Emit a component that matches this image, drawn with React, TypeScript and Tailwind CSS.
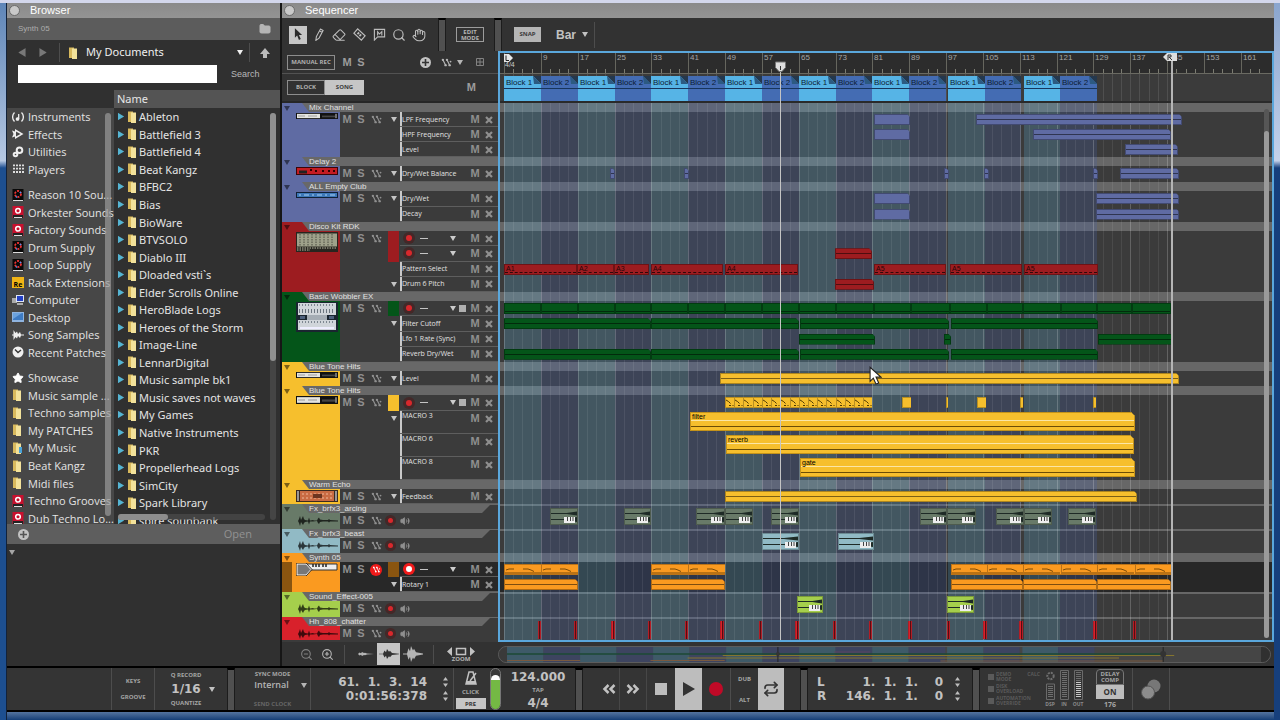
import type { ReactNode } from "react"
import clsx from "clsx"
import { Eraser, Folder, Hand, Search, Star, ZoomIn, ZoomOut, Repeat, Volume2 } from "lucide-react"

/* ---------- data ---------- */

type Clip = { from: number; to: number; label?: string; flat?: boolean }
type LaneKind = "param" | "notes" | "pattern" | "loop" | "tall" | "steps" | "audio" | "hits"
type Lane = {
  kind: LaneKind
  label?: string
  arrow?: boolean
  record?: boolean
  armed?: boolean
  snapshot?: boolean
  clips: Clip[]
}
type Track = {
  name: string
  color: string
  body: string
  device: string
  audio?: boolean
  selected?: boolean
  lanes: Lane[]
}

const spans = (...edges: number[]): Clip[] => edges.slice(1).map((to, i) => ({ from: edges[i], to }))
const pairs = (...list: [number, number, string?][]): Clip[] =>
  list.map(([from, to, label]) => ({ from, to, label }))
const sweep: Clip = { from: 81.3, to: 89.2, flat: true }

const tracks: Track[] = [
  {
    name: "Mix Channel", color: "bg-[#5f6ba3]", body: "h-[45px]", device: "mixer",
    lanes: [
      { kind: "param", label: "LPF Frequency", arrow: true, clips: [sweep, ...pairs([103.4, 148.2])] },
      { kind: "param", label: "HPF Frequency", clips: [sweep, ...pairs([115.8, 145.8])] },
      { kind: "param", label: "Level", clips: pairs([135.8, 147.3]) },
    ],
  },
  {
    name: "Delay 2", color: "bg-[#5f6ba3]", body: "h-[16px]", device: "delay",
    lanes: [
      {
        kind: "param", label: "Dry/Wet Balance", arrow: true,
        clips: pairs([24, 25], [40.1, 41.1], [96.6, 97.6], [105.3, 106.3], [129, 130], [134.7, 147.5]),
      },
    ],
  },
  {
    name: "ALL Empty Club", color: "bg-[#5f6ba3]", body: "h-[31px]", device: "reverb",
    lanes: [
      { kind: "param", label: "Dry/Wet", arrow: true, clips: [sweep, ...pairs([129.5, 147.5])] },
      { kind: "param", label: "Decay", clips: [sweep, ...pairs([129.5, 147.5])] },
    ],
  },
  {
    name: "Disco Kit RDK", color: "bg-[#9d1c20]", body: "h-[61px]", device: "drums",
    lanes: [
      { kind: "notes", record: true, clips: [] },
      { kind: "param", record: true, clips: pairs([72.8, 80.9]) },
      {
        kind: "pattern", label: "Pattern Select",
        clips: pairs(
          [1, 16.8, "A1"], [16.8, 24.8, "A2"], [24.8, 32.4, "A3"], [32.9, 48.5, "A4"], [48.9, 64.8, "A4"],
          [81.3, 96.9, "A5"], [97.8, 113.4, "A5"], [113.9, 129.9, "A5"],
        ),
      },
      { kind: "param", label: "Drum 6 Pitch", arrow: true, clips: pairs([72.8, 81.3]) },
    ],
  },
  {
    name: "Basic Wobbler EX", color: "bg-[#045519]", body: "h-[61px]", device: "synth",
    lanes: [
      {
        kind: "loop", record: true, snapshot: true,
        clips: spans(1, 9, 17, 25, 33, 41, 49, 57, 65, 73, 81.3, 89.3, 97.8, 105.8, 113.6, 121.9, 129.7, 137.3, 145.8),
      },
      { kind: "param", label: "Filter Cutoff", arrow: true, clips: pairs([1, 33], [33, 65], [65.2, 97.6], [98, 129.9]) },
      { kind: "param", label: "Lfo 1 Rate (Sync)", clips: pairs([65, 81.5], [96.5, 98], [129.9, 146.2]) },
      { kind: "param", label: "Reverb Dry/Wet", clips: pairs([1, 33], [33, 65], [65.2, 97.6], [98, 129.9]) },
    ],
  },
  {
    name: "Blue Tone Hits", color: "bg-[#f6bf2d]", body: "h-[15px]", device: "mixer",
    lanes: [{ kind: "param", label: "Level", arrow: true, clips: pairs([47.9, 147.5]) }],
  },
  {
    name: "Blue Tone Hits", color: "bg-[#f6bf2d]", body: "h-[85px] grid-rows-[16px_23px_23px_23px]", device: "combi",
    lanes: [
      {
        kind: "steps", record: true, snapshot: true,
        clips: [
          ...spans(49, 51, 53, 55, 57, 59, 61, 63, 65, 67, 69, 71, 73, 75, 77, 79, 81),
          ...pairs([87.4, 89.3], [96.9, 97.4], [103.7, 105.6], [113.1, 113.6], [128.9, 129.5]),
        ],
      },
      { kind: "tall", label: "MACRO 3", arrow: true, clips: pairs([41.3, 138, "filter"]) },
      { kind: "tall", label: "MACRO 6", clips: pairs([49.1, 137.7, "reverb"]) },
      { kind: "tall", label: "MACRO 8", clips: pairs([65.2, 138, "gate"]) },
    ],
  },
  {
    name: "Warm Echo", color: "bg-[#f6bf2d]", body: "h-[15px]", device: "echo",
    lanes: [{ kind: "param", label: "Feedback", arrow: true, clips: pairs([49, 138.4]) }],
  },
  {
    name: "Fx_brfx3_arcing", color: "bg-[#687a68]", body: "h-[16px]", device: "wave", audio: true,
    lanes: [
      {
        kind: "audio",
        clips: pairs(
          [10.9, 17], [27, 33], [42.8, 49], [49, 55], [59, 65], [91.3, 97.3], [97.3, 103.4],
          [107.8, 113.9], [113.9, 119.9], [123.4, 129.5],
        ),
      },
    ],
  },
  {
    name: "Fx_brfx3_beast", color: "bg-[#91bac5]", body: "h-[15px]", device: "wave", audio: true,
    lanes: [{ kind: "audio", clips: pairs([57, 65], [73.5, 81.3]) }],
  },
  {
    name: "Synth 05", color: "bg-[#fa9a20]", body: "h-[30px]", device: "keys", selected: true,
    lanes: [
      {
        kind: "notes", record: true, armed: true,
        clips: [...spans(1, 9, 17), ...spans(33, 41, 49), ...spans(98, 105.8, 113.6, 121.9, 129.7, 138, 146)],
      },
      { kind: "param", label: "Rotary 1", arrow: true, clips: [...pairs([1, 17], [33, 49]), ...spans(98, 113.6, 129.7, 145.8)] },
    ],
  },
  {
    name: "Sound_Effect-005", color: "bg-[#a5cf4c]", body: "h-[16px]", device: "wave", audio: true,
    lanes: [{ kind: "audio", clips: pairs([64.6, 70.2], [97.3, 103]) }],
  },
  {
    name: "Hh_808_chatter", color: "bg-[#d8212b]", body: "h-[14px]", device: "wave", audio: true,
    lanes: [
      {
        kind: "hits",
        clips: [
          8.3, 16.1, 24.2, 32.2, 40.2, 48, 56.3, 64.3, 72.4, 80.2, 88.7, 97.1, 105, 112.8, 128.9, 137.5,
        ].map((from) => ({ from, to: from + 0.8 })),
      },
    ],
  },
]

const blocks = [
  ...spans(1, 9, 17, 25, 33, 41, 49, 57, 65, 73, 81, 89, 97),
  ...spans(97.4, 105.4, 113.3),
  ...spans(113.9, 121.7, 129.7),
]

const shortcuts: [string, string][][] = [
  [["instruments", "Instruments"], ["effects", "Effects"], ["utilities", "Utilities"], ["players", "Players"]],
  [
    ["supply", "Reason 10 Sou..."], ["refill", "Orkester Sounds"], ["refill", "Factory Sounds"],
    ["supply", "Drum Supply"], ["supply", "Loop Supply"], ["re", "Rack Extensions"], ["computer", "Computer"],
    ["desktop", "Desktop"], ["samples", "Song Samples"], ["recent", "Recent Patches"],
  ],
  [
    ["star", "Showcase"], ["folder", "Music sample ..."], ["folder", "Techno samples"], ["folder", "My PATCHES"],
    ["music", "My Music"], ["folder", "Beat Kangz"], ["folder", "Midi files"], ["refill", "Techno Grooves"],
    ["refill", "Dub Techno Lo..."],
  ],
]
const shortcutRows = ["h-[70px]", "mt-2 h-[175px]", "mt-2 h-[158px]"]

const folders = [
  "Ableton", "Battlefield 3", "Battlefield 4", "Beat Kangz", "BFBC2", "Bias", "BioWare", "BTVSOLO", "Diablo III",
  "Dloaded vsti`s", "Elder Scrolls Online", "HeroBlade Logs", "Heroes of the Storm", "Image-Line", "LennarDigital",
  "Music sample bk1", "Music saves not waves", "My Games", "Native Instruments", "PKR", "Propellerhead Logs",
  "SimCity", "Spark Library", "spire sounbank",
]

/* ---------- timeline helpers ---------- */

const BAR = 4.605
const xOf = (bar: number) => Math.round(4 + (bar - 1) * BAR)
const place = (c: Clip) => ({ left: xOf(c.from), width: Math.max(2, xOf(c.to) - xOf(c.from)) })

/* ---------- small pieces ---------- */

function Down({ className }: { className?: string }) {
  return (
    <svg viewBox="0 0 6 5" className={clsx("h-[5px] w-[6px] shrink-0 fill-current", className)}>
      <path d="M0 0h6L3 5z" />
    </svg>
  )
}

function UpDown() {
  return (
    <svg viewBox="0 0 5 12" className="h-3 w-[5px] fill-[#bdbdbd]">
      <path d="M0 4.5h5L2.5 1zM0 7.5h5L2.5 11z" />
    </svg>
  )
}

function Automation({ className }: { className?: string }) {
  return (
    <svg viewBox="0 0 12 10" className={clsx("h-[9px] w-[11px] shrink-0", className)} fill="none" stroke="currentColor" strokeWidth="1.300">
      <path d="M2 2l3 6M6.500 2l3 6" />
      <g fill="currentColor" stroke="none">
        <circle cx="2" cy="2" r="1.300" /><circle cx="5" cy="8" r="1.300" /><circle cx="6.500" cy="2" r="1.300" />
        <circle cx="9.500" cy="8" r="1.300" /><circle cx="10.500" cy="4" r="1" />
      </g>
    </svg>
  )
}

function Wave({ className }: { className?: string }) {
  return (
    <svg viewBox="0 0 42 12" preserveAspectRatio="none" className={className} fill="currentColor">
      <path d="M0 6h2l1-2 1-3 1 4 2-4 1 3 1 1 3 .5 1-3 1 3 3-.5 1 .5 3 0 1-2 1-1 1 2 3 .5 5 0 1-1 1 1 8 .5v1l-8 0-1 1-1-1-5 0-3 .5-1 2-1-1-1-2-4 .5-3 0-1 3-1-3-3 .5-1 1-1 2-2-3-1 4-1-3-1-2H0z" />
    </svg>
  )
}

function Spindle({ className }: { className?: string }) {
  return (
    <svg viewBox="0 0 20 18" preserveAspectRatio="none" className={className} fill="currentColor">
      <path d="M0 8.500h4l1.500-6L7 6l1-6 2 5 1-2 2 4 7 1.500v1L13 11l-2 4-1-2-2 5-1-6-1.500 3.500-1.500-6H0z" />
    </svg>
  )
}

function Bevel({ className }: { className?: string }) {
  return (
    <div className={clsx("w-2 shrink-0 self-stretch border-x border-t-2 border-[#1c1c1c] border-t-black bg-[#505050]", className)} />
  )
}

function Rule({ className }: { className?: string }) {
  return <div className={clsx("w-px shrink-0 bg-[#4d4d4d]", className)} />
}

function DeviceIcon({ kind }: { kind: string }) {
  if (kind === "wave") return <Wave className="mt-px h-3 w-[42px] text-black/70" />
  if (kind === "keys")
    return (
      <svg viewBox="0 0 42 13" className="h-[13px] w-[42px]">
        <path d="M10 1h31v6H14z" fill="#eee" stroke="#333" />
        <path d="M17 1v3M20 1v3M23 1v3M27 1v3M30 1v3" stroke="#222" strokeWidth="1.500" />
        <path d="M1 1h9l5 5.500-5 5.500H1z" fill="#777" stroke="#fff" />
        <path d="M0 0h10l6 6.500-6 6.500H0z" fill="none" stroke="#333" />
      </svg>
    )
  if (kind === "drums")
    return (
      <svg viewBox="0 0 42 20" className="h-5 w-[42px]">
        <path d="M0 0h42v20H0z" fill="#27251f" />
        <path d="M1 1.500h40v13H1z" fill="#9fa18a" />
        {[4, 8, 12, 16, 20, 24, 28, 32, 36].map((x) => (
          <path key={x} d={`M${x} 2v12`} stroke="#4c4d40" strokeDasharray="1.500 1" />
        ))}
        <path d="M1 16h40M1 18h13" stroke="#b9bba3" strokeDasharray="1.500 1" />
      </svg>
    )
  if (kind === "synth")
    return (
      <svg viewBox="0 0 42 30" className="h-[30px] w-[42px]">
        <path d="M0 0h42v30H0z" fill="#1a2530" />
        <path d="M2 1h38v12H2zM2 18h38v10H2z" fill="#d0d5da" />
        <path d="M11 13h20v5H11z" fill="#a4acb4" />
        <path d="M3 3h36M3 20h36" stroke="#7d8791" strokeWidth="2" strokeDasharray="1 2" />
        <path d="M3 9h36" stroke="#6c7680" strokeWidth="4" strokeDasharray="1 2" />
        <path d="M4 26h34" stroke="#eef" strokeWidth="2" />
        <path d="M4 15.500h5M33 15.500h5" stroke="#4d607c" strokeWidth="3" />
      </svg>
    )
  if (kind === "delay")
    return (
      <svg viewBox="0 0 42 8" className="h-2 w-[42px]">
        <path d="M0 0h42v8H0z" fill="#3a0508" />
        <path d="M1 1h40v6H1z" fill="#c41c22" />
        <path d="M3 5h8" stroke="#222" strokeWidth="3" />
        <path d="M14 3h2M19 4h2M26 4h2M32 4h2M37 4h2" stroke="#300" strokeWidth="2" />
      </svg>
    )
  if (kind === "echo")
    return (
      <svg viewBox="0 0 42 12" className="h-3 w-[42px]">
        <path d="M0 0h42v12H0z" fill="#3a2a20" />
        <path d="M4 1h34v10H4z" fill="#c96b43" />
        <path d="M6 4h30M6 8h30" stroke="#f0b99a" strokeDasharray="2 2" />
        <path d="M17 4h9v4h-9z" fill="#6d3520" />
        <path d="M2 1v10M40 1v10" stroke="#bbb" strokeWidth="1.500" />
      </svg>
    )
  if (kind === "reverb")
    return (
      <svg viewBox="0 0 42 6" className="h-[6px] w-[42px]">
        <path d="M0 0h42v6H0z" fill="#112036" />
        <path d="M1 1h40v4H1z" fill="#3d78b8" />
        <path d="M3 3h36" stroke="#a9d0f3" strokeDasharray="2 3 5 3" />
      </svg>
    )
  return (
    <svg viewBox="0 0 42 7" preserveAspectRatio="none" className={clsx("w-[42px]", kind === "combi" ? "h-2" : "h-[6px]")}>
      <path d="M0 0h42v7H0z" fill="#111" />
      <path d="M1 1h23v5H1z" fill="#e4e4e0" />
      <path d="M2 3.500h7M12 3.500h9" stroke="#999" />
      <path d="M26 4h13" stroke="#444" strokeWidth="2" />
      <path d="M40 1v5" stroke="#ddd" />
    </svg>
  )
}

function ShortcutIcon({ kind }: { kind: string }) {
  if (kind === "star") return <Star className="size-3 fill-white text-white" />
  const art: Record<string, ReactNode> = {
    instruments: (
      <g fill="none" stroke="#eee" strokeWidth="1.300">
        <path d="M2.500 1.500C0 4 0 8 2.500 10.500M9.500 1.500C12 4 12 8 9.500 10.500M6.700 8V3" />
        <circle cx="5.500" cy="8" r="1.200" fill="#eee" />
      </g>
    ),
    effects: <path d="M0 2.500l3 1V1l8.500 5L3 11V8.500l-3 1L1.500 6zM4 3.500v5L8.500 6z" fill="#eee" fillRule="evenodd" />,
    utilities: (
      <g fill="none" stroke="#eee" strokeWidth="2">
        <circle cx="7.500" cy="4.200" r="2.800" /><circle cx="3.500" cy="8.500" r="1.800" />
      </g>
    ),
    players: <path d="M2 1.500v10M5 1.500v10M8 1.500v10M11 1.500v10" stroke="#eee" strokeWidth="1.800" strokeDasharray="1.800 1.500" />,
    supply: (
      <>
        <path d="M.5 0h11v12H.5z" fill="#080808" />
        <circle cx="6" cy="5" r="3" fill="none" stroke="#e33" strokeWidth="1.800" strokeDasharray="2 1.200" />
        <path d="M4 7.500l1 .8M8 3l1 1" stroke="#49f" strokeWidth="1.600" />
        <path d="M1 11.500h10" stroke="#ddd" />
      </>
    ),
    refill: (
      <>
        <path d="M.5 0h11v12H.5z" fill="#c8102e" />
        <circle cx="6" cy="4.800" r="2.300" fill="none" stroke="#fff" strokeWidth="1.500" />
        <path d="M1 9h10v3H1z" fill="#222" /><path d="M2 11.500h8" stroke="#ddd" />
      </>
    ),
    computer: (
      <>
        <path d="M0 4h5v5H0z" fill="#aaa" /><path d="M4 1h8v7H4z" fill="#dfe6f5" />
        <path d="M5 2h6v5H5z" fill="#2340c4" /><path d="M5 10h6" stroke="#ccc" strokeWidth="1.500" />
      </>
    ),
    desktop: <><path d="M0 1h12v10H0z" fill="#8fb4e0" /><path d="M1 2h10v7H1z" fill="#3d7bc4" /><path d="M1 8l9-6H1z" fill="#6ba2de" /></>,
    samples: <path d="M0 5.500h1.500V1l2 3L5 2.500l1 2.500L8 3l1 2.500h3v1H9L8 9 6 7 5 9.500 3.500 8l-2 3V6.500H0z" fill="#eee" />,
    recent: <><circle cx="6" cy="6" r="5.500" fill="#eee" /><path d="M3 3.500l3 3 3-2.500" stroke="#333" strokeWidth="1.400" fill="none" /></>,
    folder: <><path d="M1 .5h5V11H1z" fill="#d8b95d" /><path d="M4 1.500h5V12H4z" fill="#f3e29b" /></>,
    music: <><path d="M1 .5h5V11H1z" fill="#d8b95d" /><path d="M4 1.500h5V12H4z" fill="#f3e29b" /><path d="M7 5h3v6H7z" fill="#4aa3d8" /></>,
  }
  if (kind === "re")
    return <span className="flex h-[11px] w-3 items-end justify-center bg-[#f0b416] text-[7px] font-bold leading-none text-black">Re</span>
  return <svg viewBox="0 0 12 12" className="size-3">{art[kind]}</svg>
}

/* ---------- browser ---------- */

function TitleBar({ children }: { children: ReactNode }) {
  return (
    <div className="flex h-[15px] items-center gap-[10px] bg-linear-to-b from-[#8a8a8a] to-[#949494] pl-[2px]">
      <button aria-label="Collapse panel" className="size-[11px] rounded-full border border-[#6b6b6b] bg-[#c9c9c9]" />
      <h2 className="text-[11px] leading-none font-normal text-white">{children}</h2>
    </div>
  )
}

function Browser() {
  return (
    <section className="flex w-[273px] shrink-0 flex-col bg-[#303030]">
      <TitleBar>Browser</TitleBar>
      <div className="flex h-[22px] items-center justify-between bg-[#5c5c5c] pr-[9px] pl-[11px] text-[8px] text-[#adadad]">
        Synth 05
        <Folder className="size-3 fill-[#b5b5b5] text-[#b5b5b5]" />
      </div>
      <div className="flex h-[25px] items-center pr-[10px] pl-3">
        <button aria-label="Back"><Down className="scale-150 rotate-90 text-[#787878]" /></button>
        <button aria-label="Forward" className="ml-[15px]"><Down className="scale-150 -rotate-90 text-[#787878]" /></button>
        <Rule className="mr-2 ml-[13px] h-[19px]" />
        <button className="flex flex-1 items-center gap-[6px] text-left font-['Noto_Sans',sans-serif] text-[11px] text-[#efefef]">
          <ShortcutIcon kind="folder" />
          My Documents
          <Down className="mr-[6px] ml-auto" />
        </button>
        <Rule className="mr-[10px] h-[19px]" />
        <button aria-label="Up one level">
          <svg viewBox="0 0 10 10" className="size-[10px] fill-[#bbb]"><path d="M5 0l5 6H7v4H3V6H0z" /></svg>
        </button>
      </div>
      <div className="flex h-[25px] items-start gap-[14px] pl-[11px]">
        <input aria-label="Search files" className="h-[18px] w-[199px] bg-white px-1 text-[10px]" />
        <button className="pt-[3px] text-[9px] leading-[12px] text-[#b8b8b8]">Search</button>
      </div>
      <div className="ml-[107px] h-[18px] bg-[#545454] pl-[3px] font-['Noto_Sans',sans-serif] text-[11px] leading-[18px] text-[#e6e6e6]">Name</div>
      <div className="flex h-[416px] overflow-hidden text-[11px] text-[#e4e4e4]">
        <nav className="relative w-[107px] overflow-hidden bg-[#474747] font-['Open_Sans',sans-serif]">
          {shortcuts.map((group, i) => (
            <ul key={i} className={clsx("grid auto-rows-fr", shortcutRows[i])}>
              {group.map(([icon, text]) => (
                <li key={text} className="flex min-h-0 items-center">
                  <a href="#" className="flex items-center gap-1 pl-[5px] leading-[17px] whitespace-nowrap [&>:first-child]:shrink-0">
                    <ShortcutIcon kind={icon} />{text}
                  </a>
                </li>
              ))}
            </ul>
          ))}
          <div className="absolute top-[5px] right-[3px] h-[403px] w-[6px] rounded-full bg-[#9a9a9a]/70" />
        </nav>
        <div className="relative flex-1 overflow-hidden font-['Noto_Sans',sans-serif]">
          <ul className="grid h-[421px] auto-rows-fr">
            {folders.map((name) => (
              <li key={name} className="flex min-h-0 items-center pl-1 leading-[17px] whitespace-nowrap">
                <Down className="scale-125 -rotate-90 text-[#55b4d2]" />
                <span className="ml-[3px]"><ShortcutIcon kind="folder" /></span>
                {name}
              </li>
            ))}
          </ul>
          <div className="absolute top-[5px] right-1 h-[407px] w-[6px] rounded-full bg-[#454545]">
            <div className="h-[248px] rounded-full bg-[#909090]" />
          </div>
          <div className="absolute bottom-1 left-1 h-[6px] w-[147px] rounded-full bg-[#505050]/60">
            <div className="h-full w-[50px] rounded-full bg-[#8d8d8d]" />
          </div>
        </div>
      </div>
      <div className="flex h-5 items-center justify-between bg-[#5e5e5e] pr-7 pl-[11px] font-['Open_Sans',sans-serif] text-[11px]">
        <button aria-label="Add" className="flex size-[11px] items-center justify-center rounded-full bg-[#c2c2c2]">
          <svg viewBox="0 0 7 7" className="size-[7px]"><path d="M3.500 0v7M0 3.500h7" stroke="#555" strokeWidth="1.600" /></svg>
        </button>
        <button className="text-[#929292]">Open</button>
      </div>
      <Down className="mt-[6px] ml-[2px] text-[#a5a5a5]" />
    </section>
  )
}

/* ---------- sequencer ---------- */

function Toolbar() {
  const icon = "size-[14px] text-[#bdbdbd]"
  const tool = "flex h-[18px] w-[20px] items-center justify-center"
  return (
    <div className="flex h-[33px] items-center bg-[#323232] pl-[7px]">
      <button aria-label="Select" className="flex size-[18px] items-center justify-center bg-[#c6c6c6]">
        <svg viewBox="0 0 10 14" className="h-[13px] w-[9px]"><path d="M1 0v10.500l2.500-2.500 2 5 2-1-2-4.500H9z" fill="#2b2b2b" /></svg>
      </button>
      <button aria-label="Pencil" className={clsx(tool, "ml-[2px]")}>
        <svg viewBox="0 0 10 14" className="h-[13px] w-[9px]" fill="none" stroke="#bdbdbd" strokeWidth="1.200"><path d="M6 1l3 1.500L4.500 11 1 13.500 1.500 9.500zM5 3l3 1.500" /></svg>
      </button>
      <button aria-label="Erase" className={tool}><Eraser className={icon} strokeWidth={1.8} /></button>
      <button aria-label="Razor" className={tool}>
        <svg viewBox="0 0 14 14" className="size-[13px]" fill="none" stroke="#bdbdbd" strokeWidth="1.300">
          <path d="M5 1L1 5.500 9 13l4-4.500z" /><path d="M5 5l4 4" strokeWidth="2.500" strokeDasharray="2 1" />
        </svg>
      </button>
      <button aria-label="Mute" className={tool}>
        <svg viewBox="0 0 14 14" className="size-[13px]" fill="none" stroke="#bdbdbd" strokeWidth="1.200"><path d="M1.500 13V1.500h11v8H5z" /><path d="M5 8V4l2 2.500L9.500 4v4" /></svg>
      </button>
      <button aria-label="Magnify" className={tool}><Search className={icon} strokeWidth={2} /></button>
      <button aria-label="Hand" className={tool}><Hand className={icon} strokeWidth={1.8} /></button>
      <Bevel className="mr-[10px] ml-[9px]" />
      <button className="h-[15px] w-[28px] border border-[#9c9c9c] font-['Open_Sans',sans-serif] text-[6px] leading-[6px] font-bold text-[#b5b5b5]">EDIT MODE</button>
      <Bevel className="mr-[12px] ml-[10px]" />
      <button className="h-[15px] w-[27px] bg-[#b5b5b5] font-['Open_Sans',sans-serif] text-[6px] font-bold text-[#3a3a3a]">SNAP</button>
      <button className="ml-[15px] flex items-center gap-[6px] text-[12px] font-bold text-[#c2c2c2]">Bar<Down /></button>
      <Rule className="ml-[6px] h-[26px]" />
    </div>
  )
}

function ListHeader() {
  return (
    <div className="bg-[#323232] text-[#9c9c9c]">
      <div className="flex h-[23px] items-center border-b border-[#525252] pr-[14px] pl-[5px]">
        <button className="h-[15px] w-[48px] border border-[#8d8d8d] font-['Open_Sans',sans-serif] text-[6px] font-bold text-[#b0b0b0]">MANUAL REC</button>
        <button className="ml-[7px] w-[10px] text-[11px] font-bold">M</button>
        <button className="ml-1 w-[10px] text-[11px] font-bold">S</button>
        <button aria-label="Create track" className="ml-auto flex size-[11px] items-center justify-center rounded-full bg-[#c2c2c2]">
          <svg viewBox="0 0 7 7" className="size-[7px]"><path d="M3.500 0v7M0 3.500h7" stroke="#333" strokeWidth="1.600" /></svg>
        </button>
        <Automation className="ml-[10px] text-[#b5b5b5]" />
        <Down className="ml-[5px] text-[#b5b5b5]" />
        <svg viewBox="0 0 8 8" className="ml-[13px] size-2" fill="none" stroke="#828282"><path d="M.5.5h7v7h-7zM4 0v8M0 4h8" /></svg>
      </div>
      <div className="flex h-[29px] items-center justify-between border-b-2 border-[#262626] pr-[22px] pl-[5px]">
        <div className="flex font-['Open_Sans',sans-serif] text-[6px] font-bold">
          <button className="h-[15px] w-[38px] border border-[#8d8d8d] text-[#b0b0b0]">BLOCK</button>
          <button className="h-[15px] w-[39px] bg-[#c6c6c6] text-[#3a3a3a]">SONG</button>
        </div>
        <button className="text-[11px] font-bold">M</button>
      </div>
    </div>
  )
}

function LaneHead({ lane, color }: { lane: Lane; color: string }) {
  return (
    <div className="flex min-h-0 text-[#8f8f8f]">
      <div className={clsx("mr-px flex w-[11px] shrink-0 justify-center", lane.record && color)}>
        {lane.arrow && <Down className="mt-[5px] text-[#c4c4c4]" />}
      </div>
      <div className="flex min-w-0 flex-1 border-b border-[#5e5e5e]">
        {lane.record ? (
          <>
            <button aria-label="Record enable" className={clsx("ml-[3px] flex size-3 items-center justify-center self-center rounded-full", lane.armed ? "bg-[#f01a1a]" : "bg-[#442828]")}>
              <span className={clsx("rounded-full", lane.armed ? "size-[6px] bg-white" : "size-[6px] bg-[#d8282c]")} />
            </button>
            <span className="ml-[5px] h-px w-2 self-center bg-[#c4c4c4]" />
            <Down className="ml-[22px] self-center text-[#ccc]" />
            <span className={clsx("ml-[3px] size-[7px] self-center", lane.snapshot && "bg-[#b0b0b0]")} />
          </>
        ) : (
          <span className={clsx("flex flex-1 border-l-2 border-[#c9c9c9] font-['Open_Sans',sans-serif] text-[7px] whitespace-nowrap text-[#e2e2e2]", lane.kind === "tall" ? "items-start leading-[9px]" : "items-center leading-none")}>
            {lane.label}
          </span>
        )}
        <span className="ml-auto flex h-[15px] items-center gap-[5px] pr-[5px]">
          <button aria-label="Mute lane" className="w-[10px] text-[11px] leading-none font-bold">M</button>
          <button aria-label="Delete lane">
            <svg viewBox="0 0 8 8" className="size-2"><path d="M1 1l6 6M7 1L1 7" stroke="currentColor" strokeWidth="2.200" /></svg>
          </button>
        </span>
      </div>
    </div>
  )
}

function TrackHead({ track }: { track: Track }) {
  return (
    <div>
      <div className="flex h-[9px] bg-[#3b3b3b]">
        <div className="flex flex-1 bg-[#686868]">
          <div className={clsx("h-full w-[27px] pt-[3px] pl-[2px] [clip-path:polygon(0_0,20px_0,27px_100%,0_100%)]", track.color)}>
            <Down className="text-black/50" />
          </div>
          <span className="relative z-10 text-[8px] leading-[10px] whitespace-nowrap text-[#e0e0e0]">{track.name}</span>
        </div>
        {track.audio && <div className="w-[16px] bg-[#686868] [clip-path:polygon(0_0,100%_0,100%_1px,8px_1px,0_100%)]" />}
      </div>
      <div className={clsx("flex", track.selected ? "bg-[#282828]" : "bg-[#3b3b3b]", track.body.split(" ")[0])}>
        <div className={clsx("flex w-[58px] shrink-0 pt-px", track.color)}>
          <div className={clsx("w-[10px]", track.selected && "-mt-px bg-[#8a5510]")} />
          <div className="ml-1"><DeviceIcon kind={track.device} /></div>
        </div>
        <div className="flex h-[15px] shrink-0 items-center pl-[2px] text-[11px] leading-none font-bold text-[#8f8f8f]">
          <button aria-label="Mute" className="w-[10px]">M</button>
          <button aria-label="Solo" className="ml-[5px] w-2">S</button>
          <button aria-label="Automation" className={clsx("ml-[5px] flex size-[12px] items-center justify-center rounded-full", track.selected && "bg-[#f01a1a] text-white")}>
            <Automation className={track.selected ? "scale-75" : undefined} />
          </button>
        </div>
        {track.audio ? (
          <div className="flex h-[15px] items-center gap-1 pl-[3px]">
            <button aria-label="Record enable" className="flex size-[11px] items-center justify-center rounded-full bg-[#442828]">
              <span className="size-[5px] rounded-full bg-[#d8282c]" />
            </button>
            <Volume2 className="size-[10px] fill-[#8f8f8f] text-[#8f8f8f]" />
          </div>
        ) : (
          <div className={clsx("ml-[6px] grid min-w-0 flex-1 auto-rows-fr", track.body)}>
            {track.lanes.map((lane, i) => <LaneHead key={i} lane={lane} color={track.selected ? "bg-[#8a5510]" : track.color} />)}
          </div>
        )}
      </div>
    </div>
  )
}

function ClipView({ clip, kind, color }: { clip: Clip; kind: LaneKind; color: string }) {
  const base = clsx("absolute overflow-hidden", color)
  if (kind === "hits")
    return (
      <div className={clsx(base, "top-[2px] h-[18px] border-x border-[#b31c25]")} style={place(clip)}>
        <div className="mx-auto h-full w-px bg-black/60" />
      </div>
    )
  if (kind === "audio")
    return (
      <div className={clsx(base, "top-[2px] h-[17px] border border-black/25")} style={place(clip)}>
        <svg viewBox="0 0 30 15" preserveAspectRatio="none" className="size-full">
          <path d="M0 4h18l12-1.500v4L18 5H0zM0 10h18l12-2v5l-12-2H0z" fill="#1e2a26" />
        </svg>
        <svg viewBox="0 0 11 6" className="absolute right-[2px] bottom-px h-[6px] w-[11px]">
          <path d="M0 0h11v6H0z" fill="#eee" /><path d="M3.500 0v4M6.500 0v4M9 0v4" stroke="#444" />
        </svg>
      </div>
    )
  if (kind === "tall")
    return (
      <div className={clsx(base, "top-px h-[19px] border border-[#c4931a] [clip-path:polygon(0_0,calc(100%-4px)_0,100%_4px,100%_100%,0_100%)]")} style={place(clip)}>
        <span className="absolute top-0 left-px text-[7px] leading-[7px] text-black">{clip.label}</span>
        <div className="mt-[7px] h-px bg-[#fbe6a6]" />
        <div className="mt-[5px] h-px bg-[#6b4d05]" />
      </div>
    )
  if (kind === "steps" || kind === "notes")
    return (
      <div className={clsx(base, "top-[2px] h-[11px] border border-r-0 border-black/25")} style={place(clip)}>
        {kind === "steps" ? (
          clip.to - clip.from === 2 && <svg viewBox="0 0 9 9" className="size-[9px]"><path d="M0 2l2.500 1.500 2 2M3 7.500h2M6.500 7.500h1" stroke="#4d3903" fill="none" /></svg>
        ) : (
          <svg viewBox="0 0 36 9" className="h-[9px] w-9">
            <path d="M1 5l3-1h5M18 4h5l3 1 3 1.500M0 8h36" stroke="#7a4a08" fill="none" />
          </svg>
        )}
      </div>
    )
  return (
    <div
      className={clsx(base, "top-[2px] h-[11px] border border-black/30", kind === "param" && "[clip-path:polygon(0_0,calc(100%-3px)_0,100%_3px,100%_100%,0_100%)]")}
      style={place(clip)}
    >
      {clip.label && <span className="absolute top-0 left-px text-[7px] leading-[8px] text-black/80">{clip.label}</span>}
      {kind === "pattern" && <div className="mt-[7px] border-t border-dashed border-black/70" />}
      {kind === "loop" && <div className="mt-[7px] h-px bg-black/50" />}
      {kind === "param" && !clip.flat && <div className="mt-1 h-px bg-black/50" />}
    </div>
  )
}

function Arrange() {
  const ruler = Array.from({ length: 21 }, (_, i) => 1 + i * 8)
  const ticks = Array.from({ length: 83 }, (_, i) => 1 + i * 2)
  const grid = ticks.filter((bar) => bar < 146)
  return (
    <div className="relative min-w-0 flex-1 overflow-hidden border-2 border-[#5aa7dc] bg-[#3b3b3b]">
      {/* ruler */}
      <div className="relative h-[21px] border-b border-[#6a6a62] bg-[#2c2c2c]">
        {ticks.map((bar) => (
          <i key={bar} className="absolute bottom-0 h-[4px] w-px bg-[#7c7c72]" style={{ left: xOf(bar) }} />
        ))}
        {ruler.map((bar) => (
          <span key={bar} className="absolute top-0 h-full border-l border-[#66665e] pl-px text-[8px] leading-[9px] text-[#a5a5a5]" style={{ left: xOf(bar) }}>
            {bar > 1 && bar}
          </span>
        ))}
        <svg viewBox="0 0 10 18" className="absolute top-0 left-1 h-[18px] w-[10px]">
          <path d="M0 1h5l4 4-4 4H0z" fill="#e6e6e6" /><path d="M2 2.500v5h3" stroke="#222" fill="none" />
        </svg>
        <span className="absolute top-[8px] left-[5px] text-[7px] leading-[8px] text-[#ccc]">4/4</span>
      </div>
      {/* block lane */}
      <div className="relative h-[29px] border-b-2 border-[#2a2a2a] bg-[#3b3b3b]">
        {grid.map((bar) => <i key={bar} className="absolute inset-y-0 w-px bg-white/10" style={{ left: xOf(bar) }} />)}
        {blocks.map((b, i) => (
          <div key={i} className={clsx("absolute top-[2px] h-[25px]", i % 2 ? "bg-[#446cb3]" : "bg-[#56b4e6]")} style={place(b)}>
            <div className="flex h-[13px] justify-between border-b border-[#17355c] pl-[2px]">
              <span className="text-[8px] leading-[13px] whitespace-nowrap text-[#0c1c33]">{i % 2 ? "Block 2" : "Block 1"}</span>
              <svg viewBox="0 0 8 8" className="size-[8px] shrink-0"><path d="M0 0h8v8z" fill="#25384d" /><path d="M0 0l8 8H1z" fill="#2c5a82" /></svg>
            </div>
          </div>
        ))}
      </div>
      {/* track lanes */}
      <div className="relative">
        {tracks.map((track, i) => (
          <div key={i} className={track.selected ? "bg-[#272727]" : undefined}>
            <div className="h-[9px] bg-[#3b3b3b]">
              <div className={clsx("bg-[#676767]", track.audio ? "h-[2px]" : "h-full")} />
            </div>
            <div className={track.body.split(" ")[0]} />
          </div>
        ))}
        {blocks.map((b, i) => (
          <div key={i} className={clsx("absolute inset-y-0", i % 2 ? "bg-[#4864b4]/24" : "bg-[#60b4dd]/24")} style={place(b)} />
        ))}
        {grid.map((bar) => (
          <i key={bar} className={clsx("absolute inset-y-0 w-px", bar % 8 === 1 ? "bg-white/20" : "bg-white/8")} style={{ left: xOf(bar) }} />
        ))}
        <div className="absolute inset-0">
          {tracks.map((track, i) =>
            track.audio ? (
              <div key={i}>
                <div className="relative h-[9px]">
                  <div className="absolute inset-x-0 top-[2px]">
                    {track.lanes[0].clips.map((clip, n) => <ClipView key={n} clip={clip} kind={track.lanes[0].kind} color={track.color} />)}
                  </div>
                </div>
                <div className={track.body} />
              </div>
            ) : (
              <div key={i} className="pt-[9px]">
                <div className={clsx("grid auto-rows-fr", track.body)}>
                  {track.lanes.map((lane, l) => (
                    <div key={l} className="relative min-h-0">
                      {lane.clips.map((clip, n) => <ClipView key={n} clip={clip} kind={lane.kind} color={track.color} />)}
                    </div>
                  ))}
                </div>
              </div>
            ),
          )}
        </div>
        <div className="absolute top-[6px] right-[3px] bottom-1 w-[5px] rounded-full bg-[#565656]">
          <div className="mt-[22px] h-[507px] rounded-full bg-[#9a9a9a]" />
        </div>
      </div>
      {/* song position and right locator */}
      <div className="absolute top-[8px] bottom-0 flex w-[11px] flex-col items-center" style={{ left: xOf(61) - 5 }}>
        <svg viewBox="0 0 11 11" className="size-[11px]"><path d="M.5 1h10v5.500l-3.500 4h-3L.5 6.500z" fill="#dedede" stroke="#777" /><path d="M5.500 5v4" stroke="#333" /></svg>
        <div className="w-px flex-1 bg-[#c4c4c4]" />
      </div>
      <div className="absolute inset-y-0 w-[2px] bg-[#b5b5b5]" style={{ left: xOf(146) - 1 }} />
      <svg viewBox="0 0 15 9" className="absolute top-0 h-[9px] w-[15px]" style={{ left: xOf(145) - 4 }}>
        <path d="M4 0h10v8H4L0 4z" fill="#dedede" /><path d="M5 7V2h3v2H5.500M6 4l3 3" stroke="#333" fill="none" />
      </svg>
      {/* pointer */}
      <svg viewBox="0 0 12 18" className="absolute h-[20px] w-[13px]" style={{ left: 369, top: 313 }}>
        <path d="M1 1v13l3-3 2.500 5.500 2.500-1L6.500 10H11z" fill="#fff" stroke="#222" />
      </svg>
    </div>
  )
}

function ZoomBar() {
  const px = (bar: number) => (bar - 1) * 4.55
  return (
    <div className="flex h-6 items-center bg-[#323232] pr-[3px]">
      <div className="flex w-[216px] shrink-0 items-center pl-[18px] text-[#b5b5b5]">
        <button aria-label="Zoom out" className="opacity-60"><ZoomOut className="size-[13px]" /></button>
        <button aria-label="Zoom in" className="ml-2"><ZoomIn className="size-[13px]" /></button>
        <Rule className="mr-[9px] ml-[10px] h-[19px]" />
        <button aria-label="Small waveform" className="flex w-[23px]"><Spindle className="h-1 w-5" /></button>
        <button aria-label="Medium waveform" className="flex h-[22px] w-[23px] items-center justify-center bg-[#c6c6c6] text-[#333]"><Spindle className="h-[10px] w-5" /></button>
        <button aria-label="Large waveform" className="ml-[3px] flex"><Spindle className="h-4 w-5" /></button>
        <Rule className="mr-[13px] ml-[10px] h-[19px]" />
        <button className="flex flex-col items-center font-['Open_Sans',sans-serif] text-[6px] leading-[6px] font-bold">
          <svg viewBox="0 0 28 9" className="h-[9px] w-7" fill="#c2c2c2">
            <path d="M0 4.500L5 0v9zM28 4.500L23 0v9z" /><path d="M9.500 1.500h9v6h-9z" fill="none" stroke="#c2c2c2" strokeWidth="1.500" />
          </svg>
          ZOOM
        </button>
      </div>
      <div className="relative flex h-[17px] flex-1 overflow-hidden rounded-full border border-[#5c5c5c] bg-[#454545]">
        <div className="w-2 bg-[#3a3a3a]" />
        <svg viewBox="0 0 668 15" preserveAspectRatio="none" className="h-full flex-[88]">
          {blocks.map((b, i) => (
            <path key={i} d={`M${px(b.from)} 0H${px(b.to)}V15H${px(b.from)}z`} fill={i % 2 ? "#3d4460" : "#3e5a68"} />
          ))}
          <path d="M0 7h654" stroke="#1d4a35" strokeWidth="1.500" />
          <path d="M215 8.500h450M180 11h430" stroke="#85752f" />
          <path d="M0 13.500h73M143 13.500h74M432 14h222" stroke="#7a5a40" />
          <path d="M326 5h36" stroke="#5b4560" />
          <path d="M270 0v15M654 0v15" stroke="#222" /><circle cx="270" cy="7" r="2" fill="#333" /><circle cx="654" cy="7" r="3" fill="#333" />
        </svg>
        <div className="flex-[11]" />
        <div className="w-[9px] bg-[#303030]" />
      </div>
    </div>
  )
}

function Sequencer() {
  return (
    <section className="flex min-w-0 flex-1 flex-col border-l-2 border-[#161616] bg-[#3b3b3b]">
      <TitleBar>Sequencer</TitleBar>
      <Toolbar />
      <div className="flex">
        <div className="w-[216px] shrink-0 overflow-hidden">
          <ListHeader />
          {tracks.map((track, i) => <TrackHead key={i} track={track} />)}
        </div>
        <Arrange />
      </div>
      <ZoomBar />
    </section>
  )
}

/* ---------- transport ---------- */

const warnings = [["DEMO", "MODE"], ["DISK", "OVERLOAD"], ["AUTOMATION", "OVERRIDE"]]

function Transport() {
  const tiny = "font-['Open_Sans',sans-serif] text-[6px] leading-[6px] font-bold text-[#a5a5a5]"
  const big = "font-['DejaVu_Sans',sans-serif] text-[12px] leading-[14px] font-bold text-[#c2c2c2]"
  return (
    <footer className="flex h-[46px] items-stretch border-y-2 border-black bg-[#343434]">
      <div className="w-[104px]" />
      <Rule />
      <div className={clsx("flex w-[42px] flex-col items-center justify-center gap-[10px]", tiny)}>
        <button>KEYS</button>
        <button>GROOVE</button>
      </div>
      <Rule />
      <div className={clsx("flex w-[62px] flex-col items-center justify-center gap-1", tiny)}>
        Q RECORD
        <button className={clsx("flex items-center gap-2 pl-[14px]", big)}>1/16<Down /></button>
        QUANTIZE
      </div>
      <Bevel className="ml-[10px]" />
      <div className={clsx("flex w-[75px] flex-col items-center justify-between py-[3px]", tiny)}>
        SYNC MODE
        <button className="flex items-center gap-3 pl-4 font-['Open_Sans',sans-serif] text-[9px] leading-[10px] font-semibold text-[#b5b5b5]">Internal<Down /></button>
        <button className="mt-2 text-[#666]">SEND CLOCK</button>
      </div>
      <Rule />
      <div className={clsx("flex w-[142px] items-center justify-end gap-4 pr-[5px]", big)}>
        <div className="text-right whitespace-pre">
          <p>61.  1.  3.  14</p>
          <p>0:01:56:378</p>
        </div>
        <div className="flex flex-col gap-[2px]"><UpDown /><UpDown /></div>
      </div>
      <Rule />
      <div className={clsx("flex w-[33px] flex-col items-center justify-between pb-px", tiny)}>
        <svg viewBox="0 0 12 14" className="mt-[3px] h-[14px] w-3" fill="none" stroke="#c2c2c2" strokeWidth="1.500"><path d="M4 1h4l3 12H1zM5 10l6-8" /><path d="M2 11.500h8" strokeWidth="3" /></svg>
        <button>CLICK</button>
        <button className="h-[11px] w-[30px] bg-[#c6c6c6] text-[#333]">PRE</button>
      </div>
      <div className="ml-[3px] flex w-[11px] flex-col self-stretch rounded-full border border-[#777] bg-[#3a3a3a] pt-[6px]">
        <div className="size-[9px] rounded-full bg-white" />
        <div className="-mt-1 flex-1 rounded-b-full bg-[#74b944]" />
      </div>
      <div className={clsx("flex w-[74px] flex-col items-center justify-between pt-[2px]", big)}>
        <p>124.000</p>
        <button className={tiny}>TAP</button>
        <p>4/4</p>
      </div>
      <Bevel />
      <div className="flex items-center text-[#c2c2c2]">
        {["Rewind", "Fast forward"].map((name, i) => (
          <button key={name} aria-label={name} className="flex h-full w-[27px] items-center justify-center border-r border-[#474747] first:w-[37px] first:pl-4">
            <svg viewBox="0 0 14 10" className={clsx("h-[10px] w-[14px]", i && "rotate-180")} fill="none" stroke="currentColor" strokeWidth="2.500"><path d="M6.500 1l-4 4 4 4M12.500 1l-4 4 4 4" /></svg>
          </button>
        ))}
        <button aria-label="Stop" className="flex h-full w-7 items-center justify-center"><span className="size-3 bg-[#bdbdbd]" /></button>
        <button aria-label="Play" className="flex h-full w-[27px] items-center justify-center bg-[#bdbdbd]">
          <svg viewBox="0 0 12 14" className="h-[14px] w-3"><path d="M0 0l12 7-12 7z" fill="#333" /></svg>
        </button>
        <button aria-label="Record" className="flex h-full w-7 items-center justify-center"><span className="size-[14px] rounded-full bg-[#c00a27]" /></button>
      </div>
      <Rule />
      <div className={clsx("flex w-[27px] flex-col items-center justify-center gap-[15px]", tiny)}>
        <button>DUB</button>
        <button>ALT</button>
      </div>
      <button aria-label="Loop" className="flex w-[26px] items-center justify-center bg-[#bdbdbd] text-[#333]"><Repeat className="size-4" strokeWidth={2.5} /></button>
      <Bevel className="ml-4" />
      <div className={clsx("flex w-[164px] items-center gap-3 pl-[9px]", big)}>
        <div><p>L</p><p>R</p></div>
        <div className="ml-auto text-right whitespace-pre">
          <p>1.  1.  1.    0</p>
          <p>146.  1.  1.    0</p>
        </div>
        <div className="mr-3 flex flex-col gap-[2px]"><UpDown /><UpDown /></div>
      </div>
      <Bevel />
      <div className={clsx("flex w-[112px] items-center gap-[3px] pl-2", tiny)}>
        <ul className="flex w-[52px] shrink-0 flex-col gap-[2px] text-[5px] text-[#5a5a5a]">
          {warnings.map(([first, second], i) => (
            <li key={first} className="flex items-center gap-[2px] leading-[5px]">
              <i className="size-[6px] shrink-0 bg-[#5a5a5a]" />
              <span>{first}<br />{second}</span>
              {i === 0 && <span className="ml-auto self-start">CALC</span>}
            </li>
          ))}
        </ul>
        <div className="flex items-end pb-px">
          {["DSP", "IN", "OUT"].map((text) => (
            <div key={text} className="flex w-[14px] flex-col items-center gap-px text-[5px] text-[#8a8a8a]">
              <svg viewBox="0 0 9 30" className="h-[30px] w-[9px]">
                <path d={text === "DSP" ? "M.5 14h8v15.500h-8z" : "M.5.5h8v29h-8z"} fill="none" stroke="#6a6a6a" />
                <path d={text === "DSP" ? "M4.500 16v12" : "M4.500 2v26"} stroke="#6f6f6f" strokeWidth="5" strokeDasharray="1 1" />
                {text === "OUT" && <path d="M4.500 12v16" stroke="#c9c9c9" strokeWidth="5" strokeDasharray="1 1" />}
                {text === "DSP" && <circle cx="4.500" cy="6" r="3.200" fill="none" stroke="#6f6f6f" strokeWidth="2" strokeDasharray="2 1" />}
              </svg>
              {text}
            </div>
          ))}
        </div>
      </div>
      <div className={clsx("ml-1 flex w-7 flex-col items-center pt-px", tiny)}>
        <button className="w-full rounded-t-sm border border-[#777] py-px">DELAY COMP</button>
        <button className="h-[14px] w-full border-2 border-[#bdbdbd] bg-[#bdbdbd] text-[8px] leading-[10px] text-[#333]">ON</button>
        <span className="pt-[3px] text-[7px]">176</span>
      </div>
      <Rule className="ml-2" />
      <div className="flex w-9 items-center justify-center">
        <svg viewBox="0 0 20 21" className="h-[21px] w-5"><circle cx="13" cy="7" r="6.500" fill="#777" /><circle cx="7" cy="13.500" r="6.500" fill="#8c8c8c" stroke="#555" /></svg>
      </div>
      <Rule />
    </footer>
  )
}

export default function App() {
  return (
    <div className="flex min-h-screen flex-col overflow-hidden bg-[#16437e] font-['Liberation_Sans',Arial,sans-serif] text-[#ddd]">
      <div className="h-[3px] bg-[#d3d7ec]" />
      <div className="flex flex-1">
        <div className="w-[7px] shrink-0 border-r border-[#12223a] bg-linear-to-b from-[#5f86b8] from-0% via-[#b6c8e2] via-22% to-[#1d4f90] to-23%" />
        <div className="flex min-w-0 flex-1 flex-col bg-[#161616]">
          <div className="flex">
            <Browser />
            <Sequencer />
          </div>
          <Transport />
          <div className="min-h-[5px] flex-1 bg-linear-to-b from-[#54749f] to-[#153f77]" />
        </div>
        <div className="w-[6px] shrink-0 bg-linear-to-b from-[#8aa5ce] from-0% via-[#c4d2ea] via-22% to-[#163f7c] to-23%" />
      </div>
    </div>
  )
}
